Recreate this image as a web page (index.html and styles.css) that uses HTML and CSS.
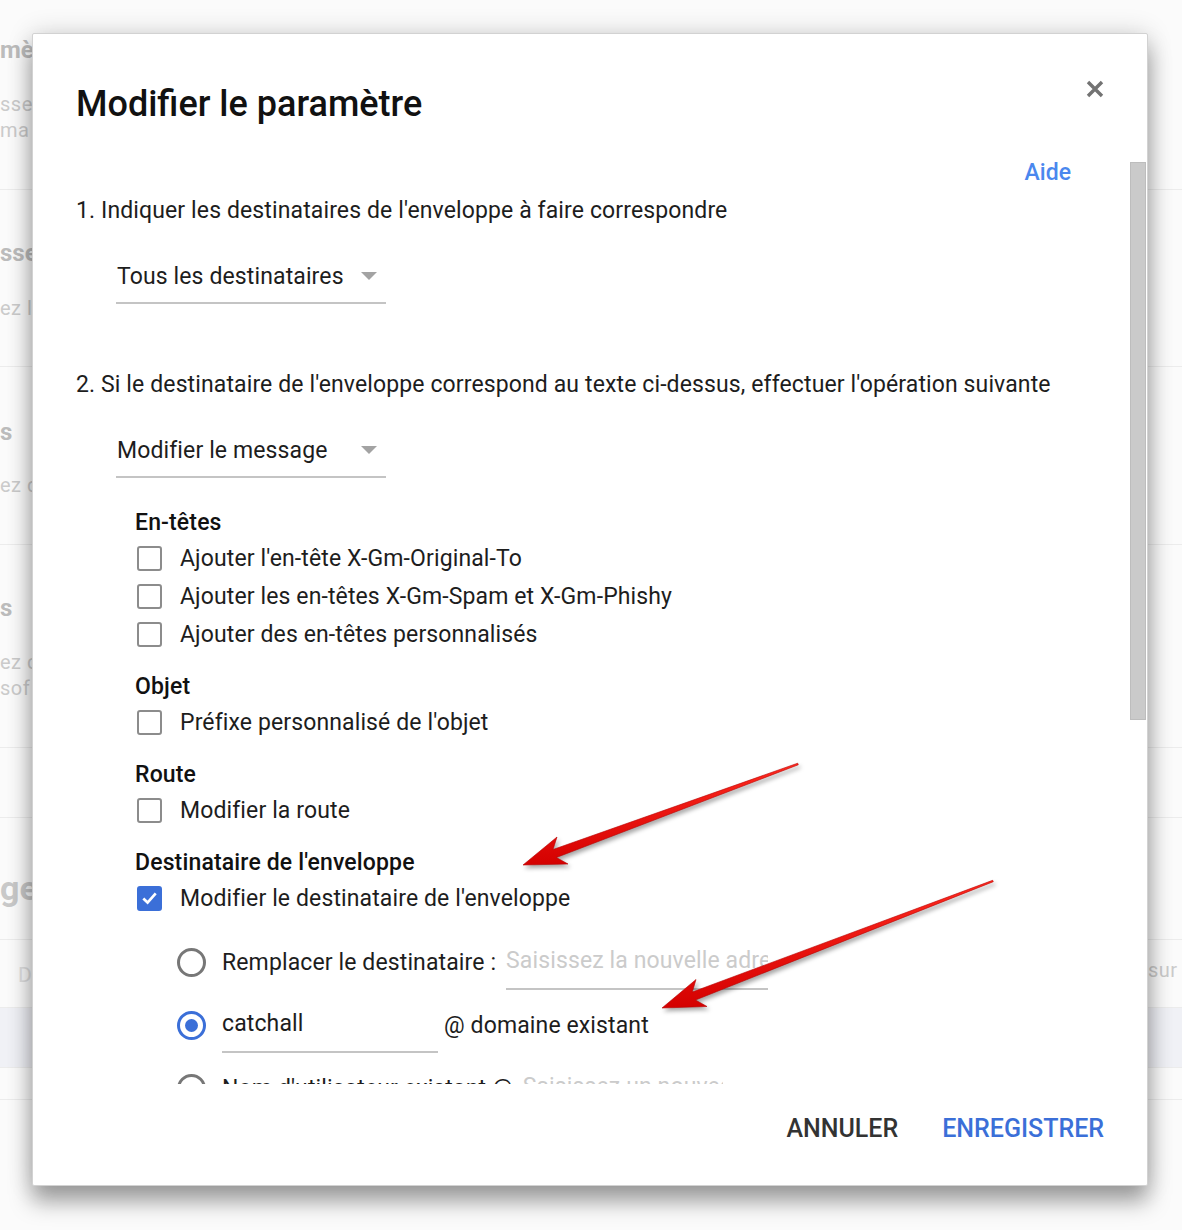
FILE: index.html
```html
<!DOCTYPE html>
<html lang="fr">
<head>
<meta charset="utf-8">
<title>Modifier le paramètre</title>
<link rel="stylesheet" href="styles.css">
</head>
<body>
<div class="page">
  <div class="bg-row r1">
    <div class="gut-l"><div class="bg-title">mè</div><div class="bg-sub gap26">sse</div><div class="bg-sub">ma</div></div>
    <div class="gut-r"></div>
  </div>
  <div class="bg-row r2">
    <div class="gut-l pad48"><div class="bg-title">sse</div><div class="bg-sub gap27">ez l</div></div>
    <div class="gut-r"></div>
  </div>
  <div class="bg-row r3">
    <div class="gut-l pad50"><div class="bg-title">s</div><div class="bg-sub gap25">ez d</div></div>
    <div class="gut-r"></div>
  </div>
  <div class="bg-row r4">
    <div class="gut-l pad48"><div class="bg-title">s</div><div class="bg-sub gap26">ez c</div><div class="bg-sub">sof</div></div>
    <div class="gut-r"></div>
  </div>
  <div class="bg-row r5"><div class="gut-l"></div><div class="gut-r"></div></div>
  <div class="bg-row r6">
    <div class="gut-l pad50"><div class="bg-big">ge</div></div>
    <div class="gut-r"></div>
  </div>
  <div class="bg-row r7">
    <div class="gut-l pad22"><div class="bg-d">D</div></div>
    <div class="gut-r pad17"><div class="bg-sub">sur</div></div>
  </div>
  <div class="bg-row r8 band"><div class="gut-l"></div><div class="gut-r"></div></div>
  <div class="bg-row r9"><div class="gut-l"></div><div class="gut-r"></div></div>
  <div class="bg-row r10"><div class="gut-l"></div><div class="gut-r"></div></div>
</div>

<div class="dialog">
  <div class="dlg-head">
    <h1 class="dlg-title">Modifier le paramètre</h1>
    <button class="close" aria-label="Fermer">
      <svg width="18" height="18" viewBox="0 0 18 18"><path d="M2 2 L16 16 M16 2 L2 16" stroke="#737373" stroke-width="3.4" stroke-linecap="butt"/></svg>
    </button>
  </div>

  <div class="dlg-body">
    <div class="content">
      <div class="help-row"><a class="help">Aide</a></div>
      <p class="question q1">1. Indiquer les destinataires de l'enveloppe à faire correspondre</p>
      <div class="select"><span>Tous les destinataires</span><span class="caret"></span></div>

      <p class="question q2">2. Si le destinataire de l'enveloppe correspond au texte ci-dessus, effectuer l'opération suivante</p>
      <div class="select"><span>Modifier le message</span><span class="caret"></span></div>

      <div class="options">
        <div class="opt-head first">En-têtes</div>
        <div class="cb-row"><span class="cb"></span><span>Ajouter l'en-tête X-Gm-Original-To</span></div>
        <div class="cb-row"><span class="cb"></span><span>Ajouter les en-têtes X-Gm-Spam et X-Gm-Phishy</span></div>
        <div class="cb-row"><span class="cb"></span><span>Ajouter des en-têtes personnalisés</span></div>

        <div class="opt-head">Objet</div>
        <div class="cb-row"><span class="cb"></span><span>Préfixe personnalisé de l'objet</span></div>

        <div class="opt-head">Route</div>
        <div class="cb-row"><span class="cb"></span><span>Modifier la route</span></div>

        <div class="opt-head">Destinataire de l'enveloppe</div>
        <div class="cb-row"><span class="cb checked"><svg width="22" height="22" viewBox="0 0 22 22"><path d="M4.5 11.5 L9 15.8 L17.5 6.2" fill="none" stroke="#fff" stroke-width="2.8"/></svg></span><span>Modifier le destinataire de l'enveloppe</span></div>

        <div class="radios">
          <div class="radio-row">
            <span class="radio"></span>
            <span>Remplacer le destinataire :</span>
            <span class="field f-new"><span class="ph">Saisissez la nouvelle adresse e-mail</span></span>
          </div>
          <div class="radio-row">
            <span class="radio on"></span>
            <span class="field f-user"><span>catchall</span></span>
            <span class="at-label">@ domaine existant</span>
          </div>
          <div class="radio-row">
            <span class="radio"></span>
            <span>Nom d'utilisateur existant @</span>
            <span class="field f-dom"><span class="ph">Saisissez un nouveau nom de domaine</span></span>
          </div>
        </div>
      </div>
    </div>
    <div class="scrollbar"><div class="thumb"></div></div>
  </div>

  <div class="dlg-foot">
    <button class="btn btn-cancel">ANNULER</button>
    <button class="btn btn-save">ENREGISTRER</button>
  </div>
</div>

<svg class="annot" width="1182" height="1230" viewBox="0 0 1182 1230">
  <defs>
    <linearGradient id="red" x1="0" y1="0" x2="0" y2="1">
      <stop offset="0" stop-color="#ff2a1f"/>
      <stop offset="1" stop-color="#d40000"/>
    </linearGradient>
  </defs>
  <polygon points="523,865 557,837 553,849.5 797.7,763.2 798.3,764.8 556.4,857.5 568,864" fill="url(#red)" stroke="#b80000" stroke-width="0.6" stroke-linejoin="round"/>
  <polygon points="662,1008 696,979.5 692.3,992 992.7,880.3 993.3,881.7 695.5,1000 707,1006.5" fill="url(#red)" stroke="#b80000" stroke-width="0.6" stroke-linejoin="round"/>
</svg>
</body>
</html>
```

FILE: styles.css
```css
* { box-sizing: border-box; }

html, body {
  margin: 0;
  padding: 0;
  width: 1182px;
  height: 1230px;
  overflow: hidden;
  background: #fafafa;
  font-family: Roboto, "Liberation Sans", Arial, sans-serif;
}

/* ---------- background page ---------- */
.page {
  width: 1182px;
  height: 1230px;
  display: flex;
  flex-direction: column;
  background: #fbfbfb;
}

.bg-row {
  display: flex;
  justify-content: space-between;
  border-bottom: 1px solid #ececec;
  flex: none;
}
.r1 { height: 190px; }
.r2 { height: 177px; }
.r3 { height: 178px; }
.r4 { height: 203px; }
.r5 { height: 70px; }
.r6 { height: 122px; }
.r7 { height: 68px; }
.r8 { height: 60px; }
.r9 { height: 32px; }
.r10 { flex: 1; border-bottom: none; }
.band { background: #f0f1f6; }

.gut-l {
  width: 32px;
  overflow: hidden;
  white-space: nowrap;
  padding-top: 35px;
}
.gut-r {
  width: 34px;
  overflow: hidden;
  white-space: nowrap;
}
.pad48 { padding-top: 48px; }
.pad50 { padding-top: 50px; }
.pad22 { padding-top: 22px; padding-left: 18px; }
.pad17 { padding-top: 17px; }

.bg-title {
  font-size: 24px;
  line-height: 30px;
  font-weight: 700;
  color: #bcbcbc;
}
.bg-sub {
  font-size: 20px;
  line-height: 26px;
  color: #cbcbcb;
  letter-spacing: 0.5px;
}
.gap25 { margin-top: 25px; }
.gap26 { margin-top: 26px; }
.gap27 { margin-top: 27px; }
.bg-big {
  font-size: 34px;
  line-height: 40px;
  font-weight: 700;
  color: #c9c9c9;
}
.bg-d {
  font-size: 21px;
  line-height: 26px;
  color: #e0e0e0;
}

/* ---------- dialog ---------- */
.dialog {
  position: absolute;
  left: 32px;
  top: 33px;
  width: 1116px;
  height: 1153px;
  background: #fff;
  border: 1px solid #d2d2d2;
  border-radius: 2px;
  box-shadow: 0 16px 22px rgba(0, 0, 0, 0.34), 0 0 26px rgba(0, 0, 0, 0.16);
  display: flex;
  flex-direction: column;
  color: #212121;
}

.dlg-head {
  flex: none;
  height: 89px;
  display: flex;
  justify-content: space-between;
  align-items: flex-start;
  padding: 46px 43px 0 43px;
}
.dlg-title {
  margin: 4px 0 0 0;
  font-size: 36px;
  line-height: 40px;
  font-weight: 500;
  color: #111;
}
.close {
  border: none;
  background: none;
  padding: 0;
  width: 18px;
  height: 18px;
  cursor: pointer;
}
.close svg { display: block; }

.dlg-body {
  flex: 1;
  min-height: 0;
  display: flex;
}
.content {
  flex: 1;
  overflow: hidden;
  padding: 35px 59px 0 43px;
  font-size: 23px;
  letter-spacing: 0.12px;
}
.scrollbar {
  flex: none;
  width: 16px;
  margin-right: 1px;
  padding-top: 39px;
}
.thumb {
  height: 558px;
  background: #cacaca;
  border: 1px solid #bdbdbd;
}

.help-row {
  display: flex;
  justify-content: flex-end;
  line-height: 30px;
}
.help {
  color: #4a87ee;
  font-size: 23px;
  font-weight: 500;
  letter-spacing: 0;
  cursor: pointer;
}

.question {
  margin: 0;
  line-height: 30px;
  font-size: 23px;
  color: #1d1d1d;
}
.q1 { margin-top: 8px; }
.q2 { margin-top: 66px; }

.select {
  margin: 36px 0 0 40px;
  width: 270px;
  display: flex;
  justify-content: space-between;
  align-items: center;
  line-height: 30px;
  padding: 0 9px 10px 1px;
  border-bottom: 2px solid #c4c4c4;
  color: #1d1d1d;
}
.caret {
  width: 0;
  height: 0;
  border-left: 8.5px solid transparent;
  border-right: 8.5px solid transparent;
  border-top: 8px solid #a3a3a3;
  margin-bottom: 2px;
}

.options {
  margin: 31px 0 0 59px;
}
.opt-head {
  margin-top: 20px;
  font-size: 23px;
  line-height: 28px;
  font-weight: 500;
  letter-spacing: 0.15px;
  color: #111;
}
.opt-head.first { margin-top: 0; }
.opt-head + .cb-row { margin-top: 2px; }

.cb-row {
  height: 38px;
  display: flex;
  align-items: center;
  color: #1d1d1d;
}
.cb {
  flex: none;
  width: 25px;
  height: 25px;
  margin: 0 18px 0 2px;
  border: 2px solid #8c8c8c;
  border-radius: 3px;
  display: flex;
  align-items: center;
  justify-content: center;
}
.cb.checked {
  background: #3b6fd8;
  border-color: #3b6fd8;
}
.cb svg { display: block; }

.radios {
  margin: 17px 0 0 42px;
  display: flex;
  flex-direction: column;
  gap: 7px;
}
.radio-row {
  height: 56px;
  display: flex;
  align-items: center;
  color: #1d1d1d;
  white-space: nowrap;
}
.radio {
  flex: none;
  width: 29px;
  height: 29px;
  border: 3px solid #777;
  border-radius: 50%;
  margin-right: 16px;
  display: flex;
  align-items: center;
  justify-content: center;
}
.radio.on { border-color: #3b6fd8; }
.radio.on::after {
  content: "";
  width: 13px;
  height: 13px;
  border-radius: 50%;
  background: #3b6fd8;
}

.field {
  flex: none;
  display: block;
  overflow: hidden;
  white-space: nowrap;
  line-height: 30px;
  padding: 12px 0 12px 0;
  border-bottom: 2px solid #c4c4c4;
}
.f-new { width: 262px; margin-left: 10px; }
.f-user { width: 216px; }
.f-dom { width: 200px; margin-left: 10px; }
.ph { color: #cbcbcb; }
.at-label { margin-left: 6px; }

.dlg-foot {
  flex: none;
  height: 101px;
  display: flex;
  justify-content: flex-end;
  align-items: center;
  gap: 44px;
  padding: 0 43px 11px 0;
}
.btn {
  border: none;
  background: none;
  padding: 0;
  font-family: Roboto, "Liberation Sans", Arial, sans-serif;
  font-size: 25px;
  font-weight: 500;
  line-height: 30px;
  cursor: pointer;
}
.btn-cancel { color: #333; }
.btn-save { color: #3b6fd8; }

/* ---------- annotation arrows ---------- */
.annot {
  position: absolute;
  left: 0;
  top: 0;
  pointer-events: none;
  filter: drop-shadow(2px 3px 2px rgba(0, 0, 0, 0.35));
}
```
